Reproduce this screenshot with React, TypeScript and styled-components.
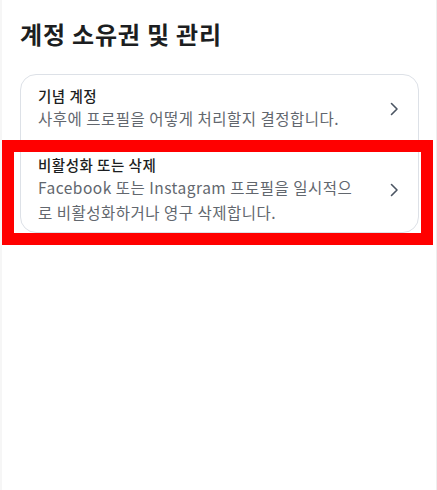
import styled, { createGlobalStyle } from "styled-components";

const GlobalStyle = createGlobalStyle`
    html, body {
        margin: 0;
        padding: 0;
        background: #fff;
    }
    body {
        font-family: "Noto Sans CJK KR", "Noto Sans", sans-serif;
        -webkit-font-smoothing: antialiased;
    }
`;

const items = [
    {
        title: "기념 계정",
        desc: "사후에 프로필을 어떻게 처리할지 결정합니다.",
        marked: false,
    },
    {
        title: "비활성화 또는 삭제",
        desc: "Facebook 또는 Instagram 프로필을 일시적으로 비활성화하거나 영구 삭제합니다.",
        marked: true,
    },
];

const Chevron = () => (
    <svg width="10" height="16" viewBox="0 0 10 16" fill="none">
        <polyline
            points="2.5,2.5 8,8 2.5,13.5"
            stroke="#4b5563"
            strokeWidth="1.6"
            strokeLinecap="round"
            strokeLinejoin="round"
        />
    </svg>
);

const App = () => {
    return (
        <>
            <GlobalStyle />
            <Page>
                <Title>계정 소유권 및 관리</Title>
                <Card>
                    {items.map((r) => (
                        <Row key={r.title}>
                            <Texts>
                                <RowTitle>{r.title}</RowTitle>
                                <RowDesc>{r.desc}</RowDesc>
                            </Texts>
                            <Chevron />
                            {r.marked && <Highlight />}
                        </Row>
                    ))}
                </Card>
            </Page>
        </>
    );
};

export default App;

const Page = styled.div`
    min-height: 490px;
    box-sizing: border-box;
    padding: 17px 17px 0 18px;
    border-left: 2px solid #f6f6f6;
    border-right: 1px solid #eeeeee;
    background: #fff;
`;

const Title = styled.h1`
    margin: 0;
    font-size: 24px;
    line-height: 34px;
    font-weight: 700;
    color: #1c1e21;
    letter-spacing: 0.8px;
`;

const Card = styled.div`
    margin-top: 23px;
    border: 1px solid #dde1e7;
    border-radius: 16px;
    display: flex;
    flex-direction: column;
    gap: 6px;
`;

const Row = styled.div`
    position: relative;
    display: flex;
    align-items: center;
    gap: 30px;
    padding: 11px 19px 7px 17px;
`;

const Texts = styled.div`
    flex: 1;
    display: flex;
    flex-direction: column;
`;

const RowTitle = styled.span`
    font-size: 14.5px;
    line-height: 20px;
    font-weight: 500;
    color: #1c1e21;
    letter-spacing: 0.5px;
`;

const RowDesc = styled.span`
    font-size: 15.5px;
    line-height: 25px;
    font-weight: 400;
    color: #62676e;
    letter-spacing: 0.5px;
`;

const Highlight = styled.div`
    position: absolute;
    left: -19px;
    right: -15px;
    top: -4px;
    bottom: -13px;
    border: 12px solid #ff0000;
    pointer-events: none;
`;
